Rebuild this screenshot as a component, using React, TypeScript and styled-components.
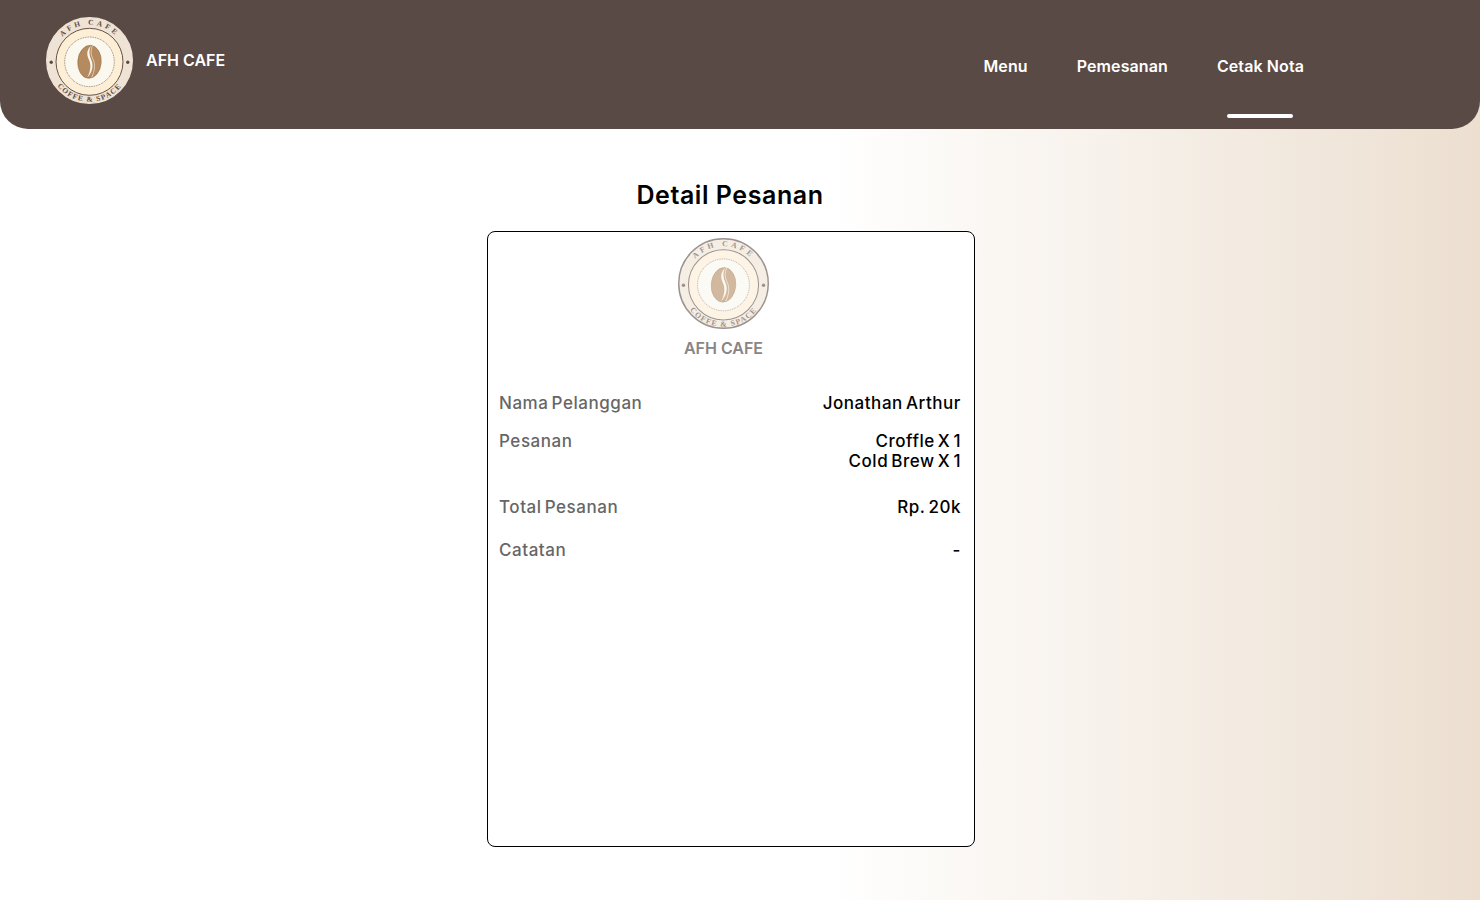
import React from "react";
import styled, { createGlobalStyle } from "styled-components";

const Global = createGlobalStyle`
  html, body { margin: 0; padding: 0; height: 100%; background: #fff; }
  #root { min-height: 900px; }
`;

const Page = styled.div`
  width: 1480px;
  height: 900px;
  overflow: hidden;
  display: flex;
  flex-direction: column;
  background: linear-gradient(90deg, #fff 56%, #ecdfd0 100%);
  font-family: Inter, "Liberation Sans", sans-serif;
`;

const Header = styled.header`
  height: 129px;
  flex: none;
  box-sizing: border-box;
  background: #5a4a46;
  border-radius: 0 0 28px 28px;
  display: flex;
  justify-content: space-between;
  padding: 17px 176px 0 46px;
`;

const Brand = styled.div`
  display: flex;
  align-items: center;
  height: 87px;
  gap: 13px;
`;

const BrandName = styled.span`
  font: 600 16px/20px Inter, sans-serif;
  color: #fff;
  margin-top: -2px;
`;

const Nav = styled.nav`
  display: flex;
  gap: 49px;
`;

const NavItem = styled.a<{ $active?: boolean }>`
  position: relative;
  display: block;
  padding-top: 39px;
  font: 600 16px/20px Inter, sans-serif;
  letter-spacing: 0.1px;
  color: #fff;
  white-space: nowrap;
  &::after {
    content: "";
    display: ${(p) => (p.$active ? "block" : "none")};
    position: absolute;
    left: 10px;
    right: 11px;
    top: 97px;
    height: 4px;
    border-radius: 2px;
    background: #fff;
  }
`;

const Main = styled.main`
  display: flex;
  flex-direction: column;
  align-items: center;
  padding-top: 51px;
  margin-left: -18px;
`;

const Title = styled.h1`
  margin: 0 2px 20px 0;
  font: 600 25px/31px Inter, sans-serif;
  letter-spacing: 0.55px;
  color: #000;
`;

const Card = styled.section`
  width: 488px;
  height: 616px;
  box-sizing: border-box;
  border: 1px solid #000;
  border-radius: 8px;
  background: #fff;
  padding: 6px 13px 0 11px;
`;

const CardBrand = styled.div`
  display: flex;
  flex-direction: column;
  align-items: center;
  padding-right: 14px;
  margin-bottom: 34px;
`;

const CardBrandName = styled.span`
  margin-top: 8px;
  padding-left: 1px;
  font: 600 16px/22px Inter, sans-serif;
  color: #8a8583;
`;

const Row = styled.div<{ $gap: number }>`
  display: flex;
  justify-content: space-between;
  margin-bottom: ${(p) => p.$gap}px;
  font: 500 17px/20px Inter, sans-serif;
  letter-spacing: 0.55px;
  word-spacing: -2px;
`;

const Label = styled.span`
  color: #666;
`;

const Value = styled.span`
  color: #000;
  text-align: right;
  white-space: pre-line;
`;

const LogoSvg = styled.svg<{ $faded?: boolean }>`
  display: block;
  flex: none;
  opacity: ${(p) => (p.$faded ? 0.6 : 1)};
`;

function Logo({ size, id, faded }: { size: number; id: string; faded?: boolean }) {
  return (
    <LogoSvg $faded={faded} width={size} height={size} viewBox="0 0 100 100">
      <defs>
        <path id={`${id}-top`} d="M 8 51 A 42 42 0 0 1 92 51" />
        <path id={`${id}-bottom`} d="M 3.5 51 A 46.5 46.5 0 0 0 96.5 51" />
      </defs>
      <circle cx="50" cy="50" r="49.2" fill="#efe3d5" stroke={faded ? "#5b4a45" : "#efe3d5"} strokeWidth="1.6" />
      <circle cx="50" cy="51.5" r="38.5" fill="#fdeed6" stroke="#5d4a40" strokeWidth="1.1" />
      <circle cx="50" cy="51.5" r="28.5" fill="#fbf8f0" stroke="#5d4a40" strokeWidth="0.8" strokeDasharray="1 1" />
      <text fontFamily="'Liberation Serif', serif" fontSize="8.5" fontWeight="700" fill="#5d4a40" letterSpacing="3.4">
        <textPath href={`#${id}-top`} startOffset="50%" textAnchor="middle">AFH CAFE</textPath>
      </text>
      <text fontFamily="'Liberation Serif', serif" fontSize="8.5" fontWeight="700" fill="#5d4a40" letterSpacing="1.4">
        <textPath href={`#${id}-bottom`} startOffset="50%" textAnchor="middle">COFFE &amp; SPACE</textPath>
      </text>
      <circle cx="6" cy="52" r="1.9" fill="#5d4a40" />
      <circle cx="94" cy="52" r="1.9" fill="#5d4a40" />
      <ellipse cx="50" cy="51.5" rx="13.5" ry="19" fill="#b58a5e" stroke="#8f6a45" strokeWidth="0.6" transform="rotate(4 50 51.5)" />
      <path d="M51.5 33 C46 39 47 44 49.5 49.5 C52 55 51.5 62 47.5 69.5 C53.5 63 55 55.5 52 49 C49.5 43.5 49 38.5 51.5 33 Z" fill="#fbf8f0" />
      <path d="M53.5 33 C51 39 51.5 43.5 54 48.5 C57 54.5 56 62 52.5 69.5" fill="none" stroke="#fbf8f0" strokeWidth="0.7" />
    </LogoSvg>
  );
}

export default function App() {
  return (
    <Page>
      <Global />
      <Header>
        <Brand>
          <Logo size={87} id="head" />
          <BrandName>AFH CAFE</BrandName>
        </Brand>
        <Nav>
          <NavItem>Menu</NavItem>
          <NavItem>Pemesanan</NavItem>
          <NavItem $active>Cetak Nota</NavItem>
        </Nav>
      </Header>
      <Main>
        <Title>Detail Pesanan</Title>
        <Card>
          <CardBrand>
            <Logo size={91} id="card" faded />
            <CardBrandName>AFH CAFE</CardBrandName>
          </CardBrand>
          <Row $gap={18}><Label>Nama Pelanggan</Label><Value>Jonathan Arthur</Value></Row>
          <Row $gap={26}><Label>Pesanan</Label><Value>{"Croffle X 1\nCold Brew X 1"}</Value></Row>
          <Row $gap={23}><Label>Total Pesanan</Label><Value>Rp. 20k</Value></Row>
          <Row $gap={0}><Label>Catatan</Label><Value>-</Value></Row>
        </Card>
      </Main>
    </Page>
  );
}
